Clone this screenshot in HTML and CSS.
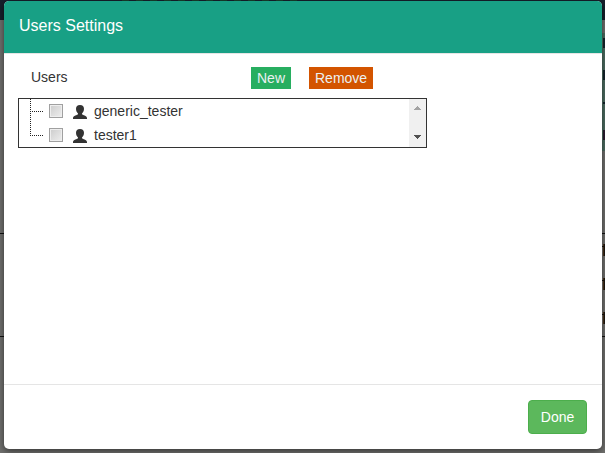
FILE: index.html
```html
<!DOCTYPE html>
<html lang="en">
<head>
<meta charset="utf-8">
<title>Users Settings</title>
<link rel="stylesheet" href="styles.css">
</head>
<body>
<div class="page" aria-hidden="true">
  <div class="page-nav"></div>
  <div class="page-gap"></div>
  <div class="page-banner"><i></i><i></i><i class="thin"></i><i class="plum"></i></div>
  <div class="page-space"></div>
  <div class="page-table"><i></i><i></i><i></i></div>
</div>
<main class="modal">
  <header class="modal-header">Users Settings</header>
  <section class="modal-body">
    <div class="toolbar">
      <span class="label">Users</span>
      <button class="tag tag-new">New</button>
      <button class="tag tag-remove">Remove</button>
    </div>
    <div class="tree">
      <ul class="nodes">
        <li class="node">
          <span class="branch"></span><span class="check"></span>
          <svg class="user" viewBox="0 0 14 14"><path d="M7 0C9.700 0 11 1.400 11 3.800C11 5.900 10.200 7.400 9 8.400V9.300C9.500 10.200 14 10.600 14 13V14H0V13C0 10.600 4.500 10.200 5 9.300V8.400C3.800 7.400 3 5.900 3 3.800C3 1.400 4.300 0 7 0Z"/></svg>
          <span>generic_tester</span>
        </li>
        <li class="node">
          <span class="branch branch-last"></span><span class="check"></span>
          <svg class="user" viewBox="0 0 14 14"><path d="M7 0C9.700 0 11 1.400 11 3.800C11 5.900 10.200 7.400 9 8.400V9.300C9.500 10.200 14 10.600 14 13V14H0V13C0 10.600 4.500 10.200 5 9.300V8.400C3.800 7.400 3 5.900 3 3.800C3 1.400 4.300 0 7 0Z"/></svg>
          <span>tester1</span>
        </li>
      </ul>
      <div class="scrollbar">
        <svg class="arrow" viewBox="0 0 7 4"><path fill="#a3a3a3" d="M3 0h1v1h1v1h1v1h1v1H0V3h1V2h1V1h1z"/></svg>
        <svg class="arrow" viewBox="0 0 7 4"><path fill="#505050" d="M0 0h7v1H6v1H5v1H4v1H3V3H2V2H1V1H0z"/></svg>
      </div>
    </div>
  </section>
  <footer class="modal-footer"><button class="done">Done</button></footer>
</main>
</body>
</html>
```
FILE: styles.css
```css
* { box-sizing: border-box; }
body {
  margin: 0;
  height: 453px;
  padding: 1px 3px 4px 4px;
  overflow: hidden;
  font: 14px/20px "Liberation Sans", Arial, sans-serif;
  color: #333;
}
button { margin: 0; font: inherit; }

/* Dimmed page behind the dialog */
.page {
  position: absolute;
  inset: 0;
  z-index: -1;
  display: flex;
  flex-direction: column;
  background: #70706e;
}
.page-nav {
  height: 20px;
  background:
    repeating-linear-gradient(90deg, #16402c 0 7px, transparent 7px 14px) 122px 0 / 178px 1px no-repeat,
    #16202c;
}
.page-gap { height: 13px; }
.page-banner {
  height: 118px;
  padding-top: 5px;
  display: flex;
  flex-direction: column;
  align-items: flex-end;
  gap: 22px;
  background: linear-gradient(90deg, #70706e 50%, #4d6d61 50%);
}
.page-banner i { width: 2px; height: 10px; background: #14242c; }
.page-banner .thin { height: 2px; margin-bottom: 4px; }
.page-banner .plum { background: #2a1c30; }
.page-space { height: 82px; }
.page-table {
  height: 104px;
  padding-top: 10px;
  display: flex;
  flex-direction: column;
  align-items: flex-end;
  gap: 22px;
  border: solid #111;
  border-width: 1px 0;
}
.page-table i {
  width: 3px;
  height: 12px;
  background:
    linear-gradient(#16120e, #16120e) 0 2px / 2px 1px no-repeat,
    linear-gradient(#4a3218, #4a3218) 1px 0 / 1px 12px no-repeat,
    linear-gradient(#1c1610, #1c1610) 2px 0 / 1px 12px no-repeat;
}

.modal {
  height: 448px;
  display: flex;
  flex-direction: column;
  overflow: hidden;
  border-radius: 5px;
  background: #fff;
  box-shadow: 0 2px 7px rgba(0, 0, 0, .55);
}
.modal-header {
  height: 53px;
  padding: 15px;
  border-bottom: 1px solid #e5e5e5;
  background: #18a085;
  color: #fff;
  font-size: 16px;
}
.modal-body { flex: 1; padding: 13px 14px; }
.toolbar { display: flex; align-items: flex-start; height: 31px; }
.label { width: 220px; padding-left: 13px; }
.tag {
  height: 22px;
  margin: 0 18px 0 0;
  padding: 0 6px;
  border: 0;
  color: #ecf0f1;
}
.tag-new { width: 40px; margin-left: 13px; background: #27ae60; }
.tag-remove { width: 64px; background: #d35400; }

.tree {
  width: 409px;
  height: 50px;
  display: flex;
  justify-content: space-between;
  overflow: hidden;
  border: 1px solid #333;
}
.nodes { margin: 0; padding: 0 0 0 11px; list-style: none; }
.node { display: flex; align-items: center; height: 24px; }
.branch {
  width: 13px;
  height: 24px;
  margin-right: 6px;
  background:
    repeating-linear-gradient(#222 0 1px, transparent 1px 2px) 0 0 / 1px 24px no-repeat,
    repeating-linear-gradient(90deg, #222 0 1px, transparent 1px 2px) 0 12px / 13px 1px no-repeat;
}
.branch-last {
  background-size: 1px 13px, 13px 1px;
}
.check {
  width: 14px;
  height: 14px;
  margin-right: 10px;
  border: 1px solid #a0a0a0;
  box-shadow: inset 0 0 0 1px #eee;
  background: linear-gradient(135deg, #ccc, #eee);
}
.user { width: 14px; height: 14px; margin: 2px 7px 0 0; fill: #333; }
.scrollbar {
  width: 17px;
  height: 48px;
  padding: 7px 0 8px;
  display: flex;
  flex-direction: column;
  justify-content: space-between;
  align-items: center;
  background: #f0f0f0;
}
.arrow { width: 7px; height: 4px; shape-rendering: crispEdges; }

.modal-footer {
  height: 65px;
  padding: 15px;
  display: flex;
  justify-content: flex-end;
  align-items: flex-start;
  border-top: 1px solid #e5e5e5;
}
.done {
  width: 59px;
  height: 34px;
  padding: 0;
  border: 1px solid #4cae4c;
  border-radius: 4px;
  background: #5cb85c;
  color: #fff;
}
```
